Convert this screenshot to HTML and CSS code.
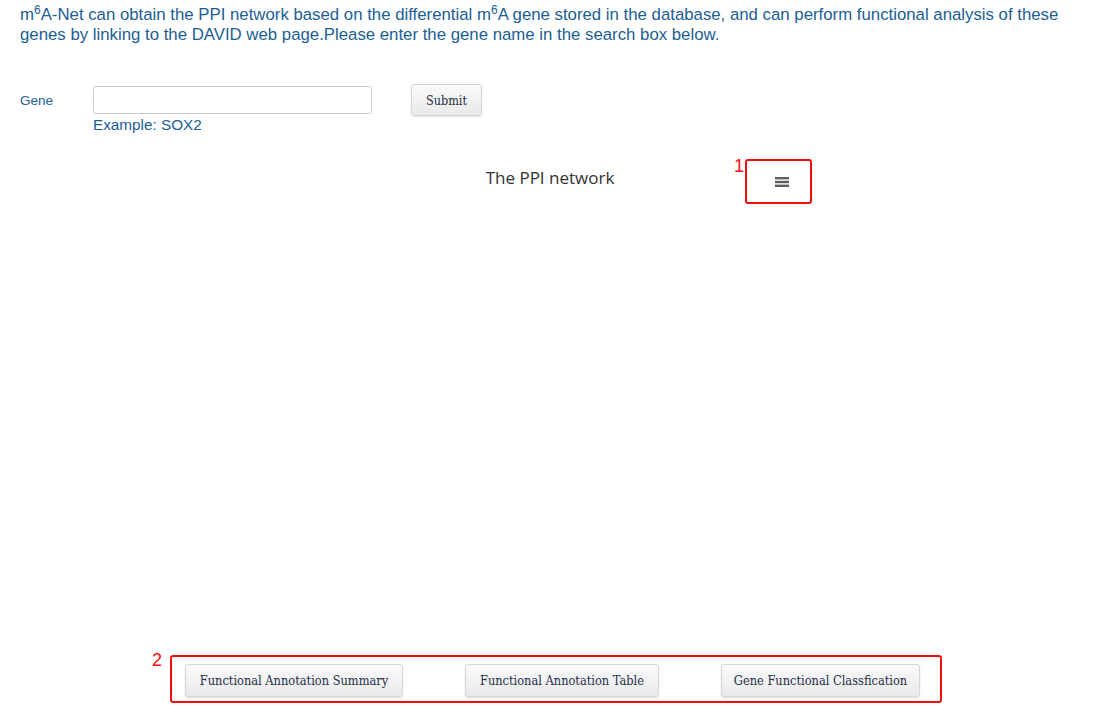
FILE: index.html
```html
<!DOCTYPE html>
<html>
<head>
<meta charset="utf-8">
<link rel="stylesheet" href="styles.css">
</head>
<body>
<div class="page">
  <p class="intro">m<sup>6</sup>A-Net can obtain the PPI network based on the differential m<sup>6</sup>A gene stored in the database, and can perform functional analysis of these genes by linking to the DAVID web page.Please enter the gene name in the search box below.</p>

  <form class="search">
    <label class="gene-label">Gene</label>
    <div class="field">
      <input class="gene-input" type="text">
      <div class="example">Example: SOX2</div>
    </div>
    <button type="button" class="btn submit">Submit</button>
  </form>

  <div class="chart">
    <div class="chart-title">The PPI network</div>
    <div class="menu-btn">
      <svg width="14" height="10" viewBox="0 0 14 10"><rect x="0" y="0" width="14" height="2.4" fill="#5e5e5e"/><rect x="0" y="3.8" width="14" height="2.4" fill="#5e5e5e"/><rect x="0" y="7.6" width="14" height="2.4" fill="#5e5e5e"/></svg>
    </div>
    <div class="mark mark1"></div>
    <div class="mark-num num1">1</div>
  </div>

  <div class="actions">
    <div class="mark-num num2">2</div>
    <div class="mark mark2"></div>
    <button type="button" class="btn act">Functional Annotation Summary</button>
    <button type="button" class="btn act">Functional Annotation Table</button>
    <button type="button" class="btn act">Gene Functional Classfication</button>
  </div>
</div>
</body>
</html>
```

FILE: styles.css
```css
* { box-sizing: border-box; }
html, body { margin: 0; padding: 0; background: #fff; }
body { width: 1100px; height: 705px; overflow: hidden; }
.page { padding: 0 20px; }
.intro {
  margin: 0;
  padding-top: 5px;
  font-family: "Liberation Sans", Arial, sans-serif;
  font-size: 16.8px;
  line-height: 20px;
  color: #1c5e94;
  width: 1050px;
}
.intro sup { font-size: 12px; line-height: 0; vertical-align: 6px; }

.search {
  margin: 39px 0 0 0;
  display: flex;
  align-items: flex-start;
  height: 50px;
}
.gene-label {
  width: 73px;
  padding-top: 9px;
  font-family: "Liberation Sans", Arial, sans-serif;
  font-size: 13.5px;
  color: #1c5e94;
}
.field { width: 318px; padding-top: 2px; }
.gene-input {
  display: block;
  width: 279px;
  height: 28px;
  border: 1px solid #ccc;
  border-radius: 3px;
  margin: 0;
  padding: 0 6px;
}
.example {
  margin-top: 2px;
  font-family: "Liberation Sans", Arial, sans-serif;
  font-size: 15.3px;
  line-height: 18px;
  color: #1c5e94;
}
.btn {
  font-family: "DejaVu Serif", "Liberation Serif", serif;
  font-stretch: condensed;
  color: #1d2f4a;
  background: linear-gradient(#fafafa, #e9e9e9);
  border: 1px solid #d6d6d6;
  border-radius: 3px;
  box-shadow: 0 1px 2px rgba(0,0,0,0.12);
  cursor: pointer;
  padding: 0;
  white-space: nowrap;
}
.submit { width: 71px; height: 32px; font-size: 12.5px; }

.chart {
  position: relative;
  height: 500px;
  margin: 20px -20px 0;
}
.chart-title {
  text-align: center;
  padding-top: 12px;
  font-family: "Open Sans", sans-serif;
  font-size: 17px;
  color: #333;
}
.menu-btn {
  position: absolute;
  left: 775px;
  top: 23px;
  line-height: 0;
}
.mark {
  position: absolute;
  border: 2px solid #f01010;
  border-radius: 3px;
}
.mark1 { left: 745px; top: 5px; width: 67px; height: 45px; }
.mark-num {
  position: absolute;
  font-family: "Liberation Sans", Arial, sans-serif;
  font-size: 18px;
  line-height: 18px;
  color: #f01010;
}
.num1 { left: 734px; top: 3px; }

.actions {
  position: relative;
  display: flex;
  gap: 62px;
  padding-left: 165px;
  padding-top: 10px;
}
.mark2 { left: 150px; top: 1px; width: 772px; height: 48px; }
.num2 { left: 132px; top: -3px; }
.act { height: 33px; font-size: 12.7px; }
.act:nth-of-type(1) { width: 218px; }
.act:nth-of-type(2) { width: 194px; }
.act:nth-of-type(3) { width: 199px; }
```
